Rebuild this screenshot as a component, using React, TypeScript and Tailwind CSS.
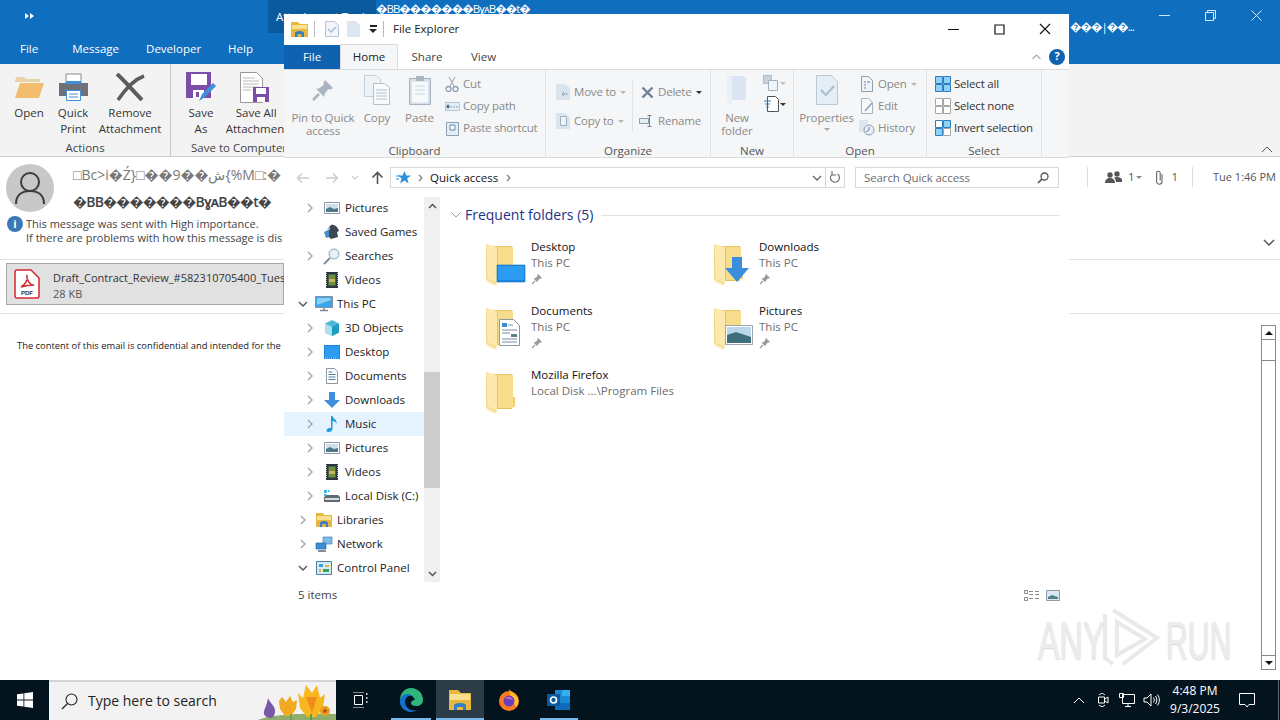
import type { ReactNode } from 'react';

const Q = '\uFFFD';

function Folder({ overlay }: { overlay?: ReactNode }) {
  return (
    <svg width="48" height="46" viewBox="0 0 48 46" className="shrink-0">
      <path d="M2 5h24v35H2z" fill="#e8c25e" />
      <path d="M12 6h15v33H12z" fill="#f7dc8c" />
      <path d="M27 28h2v10h-2z" fill="#f0cf72" />
      <path d="M0 3l11 3v35l-1 4-9-4L0 38z" fill="#fbe9ae" />
      <path d="M0 3l1 35 9 4" fill="none" stroke="#e9cd7a" strokeWidth="0.7" />
      {overlay}
    </svg>
  );
}

function Pin({ size = 12, color = '#9a9a9a' }: { size?: number; color?: string }) {
  return (
    <svg width={size} height={size} viewBox="0 0 12 12">
      <path d="M7 1l4 4-1 .6-1.5.1L6.800 8l-.2 1.500L2.500 5.400 4 5.200 6.300 3.500 6.400 2z" fill={color} />
      <path d="M4 8l-3 3" stroke={color} strokeWidth="1.300" />
    </svg>
  );
}

function FolderItem({ name, sub, pinned = true, overlay }: { name: string; sub: string; pinned?: boolean; overlay?: ReactNode }) {
  return (
    <div className="flex h-16 w-[228px] pl-[35px]">
      <div className="mt-[1px] w-[45px] shrink-0">
        <Folder overlay={overlay} />
      </div>
      <div className="-mt-[1px] flex flex-col whitespace-nowrap text-[11.5px] leading-4">
        <span className="text-[#111]">{name}</span>
        <span className="text-[#6d6d6d]">{sub}</span>
        {pinned ? (
          <span className="mt-[2px]">
            <Pin />
          </span>
        ) : null}
      </div>
    </div>
  );
}

function NavIcon({ kind }: { kind: string }) {
  switch (kind) {
    case 'pictures':
      return (
        <svg width="16" height="16" viewBox="0 0 16 16">
          <path d="M.5 2.500h15v11H.5z" fill="#fff" stroke="#8b98a3" />
          <path d="M2 4h12v8H2z" fill="#cfe0ec" />
          <path d="M2 9l4-2 4 2 4-1v4H2z" fill="#4d7a88" />
        </svg>
      );
    case 'games':
      return (
        <svg width="18" height="18" viewBox="0 0 18 18">
          <path d="M1 9l6-3v8l-4 1z" fill="#4a8fd0" />
          <path d="M8 2c3-1 7 2 8 6l-2 1 1 5-7 2-2-2V4z" fill="#3d4750" />
          <path d="M4 6l3-3v4z" fill="#8fb6da" />
        </svg>
      );
    case 'search':
      return (
        <svg width="18" height="18" viewBox="0 0 18 18">
          <circle cx="11" cy="7" r="5" fill="#e6f1f8" stroke="#8fa7b8" />
          <path d="M7 11l-6 6" stroke="#7a8b96" strokeWidth="1.800" />
        </svg>
      );
    case 'videos':
      return (
        <svg width="16" height="16" viewBox="0 0 16 16">
          <path d="M2 0h12v16H2z" fill="#2b3740" />
          <path d="M4.500 2.500h7v11h-7z" fill="#6f8f45" />
          <path d="M5 7h6v3H5z" fill="#c9b85a" />
          <path d="M2.500 1v14M13.500 1v14" stroke="#a9b4bb" strokeDasharray="1 1" />
        </svg>
      );
    case 'pc':
      return (
        <svg width="18" height="16" viewBox="0 0 18 16">
          <path d="M.5.500h17v11H.5z" fill="#3aa5ea" stroke="#84939f" />
          <path d="M2 2h14v2L2 9z" fill="#8ad0f6" />
          <path d="M5 14.500h8M9 12v2" stroke="#7b8a96" strokeWidth="1.500" />
        </svg>
      );
    case '3d':
      return (
        <svg width="16" height="16" viewBox="0 0 16 16">
          <path d="M8 0l7 3.500v9L8 16l-7-3.500v-9z" fill="#4cb8d6" />
          <path d="M1 3.500L8 7v9l-7-3.500z" fill="#a9e2ee" />
          <path d="M8 7l7-3.500v9L8 16z" fill="#1f9cc4" />
        </svg>
      );
    case 'desktop':
      return (
        <svg width="16" height="14" viewBox="0 0 16 14">
          <path d="M0 0h16v14H0z" fill="#1a86e0" />
          <path d="M1 1h14v11H1z" fill="#2b9cf2" />
          <path d="M1 13h14" stroke="#cfe8fb" strokeDasharray="1 1" />
        </svg>
      );
    case 'documents':
      return (
        <svg width="14" height="16" viewBox="0 0 14 16">
          <path d="M1.500.500h8l3 3v12h-11z" fill="#fff" stroke="#8b98a3" />
          <path d="M3.500 4h4M3.500 6.500h7M3.500 9h7M3.500 11.500h7" stroke="#4f7f9f" />
        </svg>
      );
    case 'downloads':
      return (
        <svg width="16" height="16" viewBox="0 0 16 16">
          <path d="M5 0h6v8h5l-8 8-8-8h5z" fill="#3f8fdb" />
        </svg>
      );
    case 'music':
      return (
        <svg width="14" height="16" viewBox="0 0 14 16">
          <path d="M6 0h1.500c.5 3 5 3.500 4 8C11 5.500 9 5.500 7.500 5v8c0 1.800-1.800 3-4 3S1 14.500 2 13.300c1-1.200 2.800-1.500 4-1z" fill="#1e9be0" />
        </svg>
      );
    case 'disk':
      return (
        <svg width="18" height="14" viewBox="0 0 18 14">
          <path d="M1 1h3v3H1zM5 1h1.500v2H5zM1 5h2.500v2H1z" fill="#3fb6e8" />
          <path d="M1 8l3-2h11l2 2v5H1z" fill="#5f6a72" />
          <path d="M2 9h14v2H2z" fill="#d7dcdf" />
        </svg>
      );
    case 'libraries':
      return (
        <svg width="16" height="16" viewBox="0 0 16 16">
          <path d="M0 1h7l1 2h8v12H0z" fill="#e9b73f" />
          <path d="M1 4h14v4H1z" fill="#f9e08f" />
          <path d="M4 15v-4c0-1 1-2 4-2s4 1 4 2v4H9.800v-3H6.200v3z" fill="#3a7dc2" />
        </svg>
      );
    case 'network':
      return (
        <svg width="18" height="16" viewBox="0 0 18 16">
          <path d="M8 1h9v7H8z" fill="#7bbbe8" stroke="#4d86b5" strokeWidth="0.700" />
          <path d="M1 7h10v6H1z" fill="#3a8dd2" stroke="#2f6d9f" strokeWidth="0.700" />
          <path d="M3 15h8" stroke="#5a6872" strokeWidth="1.500" />
        </svg>
      );
    default:
      return (
        <svg width="16" height="14" viewBox="0 0 16 14">
          <path d="M.5.500h15v13H.5z" fill="#d4ecf8" stroke="#4b7f9f" />
          <path d="M3 3h4v3H3z" fill="#3aa0d8" />
          <path d="M9 4h4v2H9zM3 8h2v3H3z" fill="#e2b33c" />
          <path d="M7 8h6v3H7z" fill="#3f9d5a" />
        </svg>
      );
  }
}

function NavRow({ label, icon, level = 2, state = 'closed', selected = false }: { label: string; icon: string; level?: 1 | 2; state?: 'closed' | 'open' | 'none'; selected?: boolean }) {
  return (
    <div className={`flex h-6 shrink-0 items-center text-[11.5px] text-[#222] ${selected ? 'bg-[#e5f3ff]' : ''}`}>
      <span className={`flex w-3 justify-center ${level === 2 ? 'ml-[20px]' : 'ml-[13px]'}`}>
        {state === 'closed' ? (
          <svg width="8" height="10" viewBox="0 0 8 10">
            <path d="M2 1l4 4-4 4" fill="none" stroke="#a6a6a6" strokeWidth="1.400" />
          </svg>
        ) : null}
        {state === 'open' ? (
          <svg width="10" height="8" viewBox="0 0 10 8">
            <path d="M1 2l4 4 4-4" fill="none" stroke="#555" strokeWidth="1.400" />
          </svg>
        ) : null}
      </span>
      <span className={`flex w-[18px] justify-center ${level === 2 ? 'ml-[7px]' : 'ml-[6px]'}`}>
        <NavIcon kind={icon} />
      </span>
      <span className="ml-[4px] whitespace-nowrap">{label}</span>
    </div>
  );
}

function RibbonGroup({ width, label, children }: { width: number; label: string; children: ReactNode }) {
  return (
    <div className="flex shrink-0 flex-col border-r border-[#e2e3e4]" style={{ width }}>
      <div className="flex h-[72px] shrink-0">{children}</div>
      <div className="mt-[1px] text-center text-[11.5px] leading-4 text-[#555]">{label}</div>
    </div>
  );
}

function BigButton({ width, icon, label, dim = true, caret = false }: { width: number; icon: ReactNode; label: ReactNode; dim?: boolean; caret?: boolean }) {
  return (
    <div className={`flex shrink-0 flex-col items-center whitespace-nowrap pt-[5px] text-center text-[11.5px] leading-[13px] tracking-[-0.1px] ${dim ? 'text-[#8a8a8a]' : 'text-[#333]'}`} style={{ width }}>
      <div className="flex h-[30px] items-center justify-center">{icon}</div>
      <div className="mt-[6px]">{label}</div>
      {caret ? <div className="mt-[4px] h-0 w-0 border-x-[3px] border-t-[3px] border-x-transparent border-t-[#aaa]" /> : null}
    </div>
  );
}

function SmallButton({ icon, label, dim = true, caret = false, dark = false }: { icon: ReactNode; label: string; dim?: boolean; caret?: boolean; dark?: boolean }) {
  return (
    <div className={`flex h-[22px] items-center whitespace-nowrap text-[11.5px] tracking-[-0.2px] ${dim ? 'text-[#8a8a8a]' : 'text-[#333]'}`}>
      <span className="flex w-[18px] justify-center">{icon}</span>
      <span className="ml-[2px]">{label}</span>
      {caret ? <span className={`ml-[4px] h-0 w-0 border-x-[3px] border-t-[3px] border-x-transparent ${dark ? 'border-t-[#333]' : 'border-t-[#b5b5b5]'}`} /> : null}
    </div>
  );
}

function SelectIcon({ kind }: { kind: 'all' | 'none' | 'invert' }) {
  const c = {
    all: ['#8fd0f6', '#8fd0f6', '#8fd0f6', '#8fd0f6'],
    none: ['#fff', '#fff', '#fff', '#fff'],
    invert: ['#fff', '#8fd0f6', '#8fd0f6', '#fff'],
  }[kind];
  const stroke = kind === 'none' ? '#a6a6a6' : '#2a7fc0';
  return (
    <svg width="16" height="16" viewBox="0 0 16 16">
      <path d="M.5.500h7v7h-7z" fill={c[0]} stroke={stroke} />
      <path d="M8.500.500h7v7h-7z" fill={c[1]} stroke={stroke} />
      <path d="M.5 8.500h7v7h-7z" fill={c[2]} stroke={stroke} />
      <path d="M8.500 8.500h7v7h-7z" fill={c[3]} stroke={kind === 'invert' ? '#a6a6a6' : stroke} />
    </svg>
  );
}

function Explorer() {
  return (
    <div className="absolute left-[284px] top-[14px] flex h-[594px] w-[785px] flex-col bg-white text-[#222]">
      {/* title bar */}
      <div className="flex h-[30px] shrink-0 items-center">
        <span className="ml-[7px]">
          <svg width="17" height="17" viewBox="0 0 17 17">
            <path d="M0 1h7l2 2h8v13H0z" fill="#e9b73f" />
            <path d="M1 4h15v4H1z" fill="#f9e08f" />
            <path d="M4 16v-4c0-1 1-2 4.500-2s4.500 1 4.500 2v4h-2.500v-3h-4v3z" fill="#2f7fc9" />
          </svg>
        </span>
        <span className="ml-[6px] h-4 w-px bg-[#bbb]" />
        <span className="ml-[10px]">
          <svg width="14" height="16" viewBox="0 0 14 16">
            <path d="M.5.500h9l4 4v11H.5z" fill="#f2f6fa" stroke="#b9c6d2" />
            <path d="M3 8l3 3 5-5" fill="none" stroke="#a6bfd6" strokeWidth="1.500" />
          </svg>
        </span>
        <span className="ml-[8px]">
          <svg width="13" height="16" viewBox="0 0 13 16">
            <path d="M0 0h9l4 4v12H0z" fill="#dde7f2" />
          </svg>
        </span>
        <span className="ml-[9px] flex flex-col items-center gap-[2px]">
          <span className="h-[1.5px] w-[7px] bg-[#222]" />
          <span className="h-0 w-0 border-x-[4px] border-t-[4px] border-x-transparent border-t-[#222]" />
        </span>
        <span className="ml-[6px] h-4 w-px bg-[#bbb]" />
        <span className="ml-[9px] text-[11.5px]">File Explorer</span>
        <div className="ml-auto mr-[1px] flex">
          <span className="flex h-[30px] w-[46px] items-center justify-center">
            <svg width="11" height="11" viewBox="0 0 11 11">
              <path d="M0 5.500h11" stroke="#111" />
            </svg>
          </span>
          <span className="flex h-[30px] w-[46px] items-center justify-center">
            <svg width="11" height="11" viewBox="0 0 11 11">
              <path d="M1 1h9v9H1z" fill="none" stroke="#111" strokeWidth="1.200" />
            </svg>
          </span>
          <span className="flex h-[30px] w-[46px] items-center justify-center">
            <svg width="12" height="12" viewBox="0 0 12 12">
              <path d="M1 1l10 10M11 1L1 11" stroke="#111" strokeWidth="1.100" />
            </svg>
          </span>
        </div>
      </div>
      {/* tabs */}
      <div className="flex h-[25px] shrink-0 items-stretch text-[11.5px]">
        <div className="mt-[1px] flex w-[56px] items-center justify-center bg-[#0f62b0] text-white">File</div>
        <div className="flex w-[58px] items-center justify-center border-x border-t border-[#dadbdc] bg-[#f5f6f7]">Home</div>
        <div className="flex w-[58px] items-center justify-center text-[#444]">Share</div>
        <div className="flex w-[55px] items-center justify-center text-[#444]">View</div>
        <div className="ml-auto mr-[4px] flex items-center gap-[8px]">
          <svg width="9" height="6" viewBox="0 0 9 6">
            <path d="M.5 5l4-4 4 4" fill="none" stroke="#aaa" strokeWidth="1.200" />
          </svg>
          <span className="flex h-4 w-4 items-center justify-center rounded-full bg-[#0f62b0] text-[11px] font-bold text-white">?</span>
        </div>
      </div>
      {/* ribbon */}
      <div className="flex h-[89px] shrink-0 border-y border-[#dadbdc] bg-[#f5f6f7]">
        <RibbonGroup width={262} label="Clipboard">
          <div className="ml-[6px]" />
          <BigButton
            width={66}
            label={
              <>
                Pin to Quick
                <br />
                access
              </>
            }
            icon={<Pin size={24} color="#a9b4be" />}
          />
          <BigButton
            width={42}
            label="Copy"
            icon={
              <svg width="26" height="30" viewBox="0 0 26 30">
                <path d="M.5.500h12l4 4v17H.5z" fill="#eef3f8" stroke="#c4cfd9" />
                <path d="M9.500 8.500h11l5 4v17h-16z" fill="#f7f9fb" stroke="#b4c2cf" />
                <path d="M12 15h11M12 18h11M12 21h11M12 24h11" stroke="#b4c2cf" />
              </svg>
            }
          />
          <BigButton
            width={43}
            label="Paste"
            icon={
              <svg width="22" height="30" viewBox="0 0 22 30">
                <path d="M.5 3.500h21v26H.5z" fill="#d4dfe9" stroke="#a6b3bf" />
                <path d="M3 6.500h16v21H3z" fill="#f7f9fb" />
                <path d="M7 1h8v5H7z" fill="#aab6c2" />
                <path d="M6 11h10M6 15h10M6 19h10" stroke="#c7d6e4" />
              </svg>
            }
          />
          <div className="ml-[2px] flex flex-col pt-[3px]">
            <SmallButton
              label="Cut"
              icon={
                <svg width="14" height="16" viewBox="0 0 14 16">
                  <circle cx="3.500" cy="13" r="2.500" fill="none" stroke="#8ba0b5" strokeWidth="1.300" />
                  <circle cx="10.500" cy="13" r="2.500" fill="none" stroke="#8ba0b5" strokeWidth="1.300" />
                  <path d="M4.500 11L10 1M9.500 11L4 1" stroke="#aab2b9" strokeWidth="1.200" />
                </svg>
              }
            />
            <SmallButton
              label="Copy path"
              icon={
                <svg width="15" height="9" viewBox="0 0 15 9">
                  <path d="M.5.500h14v8H.5z" fill="#e6eff7" stroke="#b9c6d2" />
                  <path d="M2 3h2v3H2zM5 5h2M8 5h2M11 5h2" stroke="#7fa4c6" />
                </svg>
              }
            />
            <SmallButton
              label="Paste shortcut"
              icon={
                <svg width="13" height="15" viewBox="0 0 13 15">
                  <path d="M.5 1.500h12v13H.5z" fill="#e6eef5" stroke="#8fa0b0" />
                  <path d="M4 4h5v5H4z" fill="#fff" stroke="#5d85a8" />
                </svg>
              }
            />
          </div>
        </RibbonGroup>
        <RibbonGroup width={165} label="Organize">
          <div className="flex w-[86px] shrink-0 flex-col gap-[7px] pl-[8px] pt-[11px]">
            <SmallButton
              caret
              label="Move to"
              icon={
                <svg width="14" height="16" viewBox="0 0 14 16">
                  <path d="M0 0h9l5 4v12H0z" fill="#d9e4ee" />
                  <path d="M6 10h6M6 10l2-2M6 10l2 2" stroke="#8fa5b9" />
                </svg>
              }
            />
            <SmallButton
              caret
              label="Copy to"
              icon={
                <svg width="14" height="16" viewBox="0 0 14 16">
                  <path d="M0 0h9l5 4v12H0z" fill="#d9e4ee" />
                  <path d="M4.500 3.500h6v9h-6z" fill="#eef3f8" stroke="#9cb0c2" />
                </svg>
              }
            />
          </div>
          <div className="mt-[10px] h-[52px] w-px bg-[#e2e3e4]" />
          <div className="ml-[5px] flex flex-col gap-[7px] pt-[11px]">
            <SmallButton
              caret
              dark
              label="Delete"
              icon={
                <svg width="13" height="13" viewBox="0 0 13 13">
                  <path d="M1.500 1.500l10 10M11.500 1.500l-10 10" stroke="#6d8299" strokeWidth="2.400" />
                </svg>
              }
            />
            <SmallButton
              label="Rename"
              icon={
                <svg width="16" height="12" viewBox="0 0 16 12">
                  <path d="M.5 3.500h9v5h-9z" fill="#e6eef5" stroke="#8fa0b0" />
                  <path d="M10.500 0v12M8.500.500h4M8.500 11.500h4" stroke="#6d8299" />
                </svg>
              }
            />
          </div>
        </RibbonGroup>
        <RibbonGroup width={83} label="New">
          <div className="ml-[6px]" />
          <BigButton
            width={40}
            label={
              <>
                New
                <br />
                folder
              </>
            }
            icon={
              <svg width="20" height="30" viewBox="0 0 20 30">
                <path d="M0 1h16l3 2v22H4l-1 4-3-3z" fill="#dbe6f2" />
                <path d="M0 1l5 1v24l-2 3-3-3z" fill="#eaf0f7" />
              </svg>
            }
          />
          <div className="ml-[6px] flex flex-col gap-[3px] pt-[4px]">
            <div className="flex h-[18px] items-center">
              <svg width="17" height="16" viewBox="0 0 17 16">
                <path d="M.5.500h8v8h-8z" fill="#c6d3de" stroke="#b0bdc8" />
                <path d="M5.500 5.500h9v10h-9z" fill="#f1f5f8" stroke="#9fb0bf" />
              </svg>
              <span className="h-0 w-0 border-x-[3px] border-t-[3px] border-x-transparent border-t-[#c0c0c0]" />
            </div>
            <div className="flex h-[18px] items-center">
              <svg width="16" height="16" viewBox="0 0 16 16">
                <path d="M4.500.500h8l3 3v12h-11z" fill="#fff" stroke="#555" />
                <path d="M1 5h7M2 8h5M3 11h3" stroke="#3a7fb8" strokeWidth="1.200" />
              </svg>
              <span className="ml-[1px] h-0 w-0 border-x-[3px] border-t-[3px] border-x-transparent border-t-[#333]" />
            </div>
          </div>
        </RibbonGroup>
        <RibbonGroup width={133} label="Open">
          <div className="ml-[4px]" />
          <BigButton
            width={57}
            caret
            label="Properties"
            icon={
              <svg width="22" height="30" viewBox="0 0 22 30">
                <path d="M.5.500h15l6 6v23H.5z" fill="#e6eef5" stroke="#b9c8d6" />
                <path d="M5 15l5 5 8-9" fill="none" stroke="#a9bfd2" strokeWidth="2.200" />
              </svg>
            }
          />
          <div className="ml-[3px] flex flex-col pt-[3px]">
            <SmallButton
              caret
              label="Open"
              icon={
                <svg width="13" height="16" viewBox="0 0 13 16">
                  <path d="M.5.500h7l4 4v11h-11z" fill="#eef3f8" stroke="#8fa0b0" />
                  <path d="M3 6h2M3 9h2M3 12h2M6 6h3" stroke="#6d8299" />
                </svg>
              }
            />
            <SmallButton
              label="Edit"
              icon={
                <svg width="13" height="16" viewBox="0 0 13 16">
                  <path d="M.5.500h7l4 4v11h-11z" fill="#f7f9fb" stroke="#a6b3bf" />
                  <path d="M4 13l7-8" stroke="#8ba0b5" strokeWidth="1.500" />
                </svg>
              }
            />
            <SmallButton
              label="History"
              icon={
                <svg width="16" height="16" viewBox="0 0 16 16">
                  <path d="M0 0h9v12H0z" fill="#dde7f0" />
                  <circle cx="10" cy="10" r="5" fill="#e6eef5" stroke="#8ba0b5" />
                  <path d="M10 7v3l-3 2" fill="none" stroke="#6d8299" />
                </svg>
              }
            />
          </div>
        </RibbonGroup>
        <RibbonGroup width={115} label="Select">
          <div className="ml-[7px] flex flex-col pt-[3px]">
            <SmallButton dim={false} label="Select all" icon={<SelectIcon kind="all" />} />
            <SmallButton dim={false} label="Select none" icon={<SelectIcon kind="none" />} />
            <SmallButton dim={false} label="Invert selection" icon={<SelectIcon kind="invert" />} />
          </div>
        </RibbonGroup>
      </div>
      {/* address row */}
      <div className="flex h-[39px] shrink-0 items-center">
        <span className="ml-[12px] w-[14px]">
          <svg width="14" height="12" viewBox="0 0 14 12">
            <path d="M13 6H2M6 1.500L1.500 6 6 10.500" fill="none" stroke="#ccc" strokeWidth="1.500" />
          </svg>
        </span>
        <span className="ml-[15px] w-[14px]">
          <svg width="14" height="12" viewBox="0 0 14 12">
            <path d="M1 6h11M8 1.500L12.500 6 8 10.500" fill="none" stroke="#ccc" strokeWidth="1.500" />
          </svg>
        </span>
        <span className="ml-[12px] w-[8px]">
          <svg width="8" height="6" viewBox="0 0 8 6">
            <path d="M1 1l3 3 3-3" fill="none" stroke="#ccc" strokeWidth="1.200" />
          </svg>
        </span>
        <span className="ml-[12px] w-[14px]">
          <svg width="13" height="13" viewBox="0 0 13 13">
            <path d="M6.500 13V2M1.500 6.500l5-5 5 5" fill="none" stroke="#555" strokeWidth="1.600" />
          </svg>
        </span>
        <div className="ml-[5px] flex h-[21px] w-[436px] items-center border border-[#d9d9d9] text-[11.5px]">
          <svg className="ml-[5px]" width="15" height="14" viewBox="0 0 15 14">
            <path d="M8.500 0l1.700 4.500H15l-3.800 3 1.400 5-4.100-3-4.400 3 1.500-5-3.600-3h4.600z" fill="#2c8fdc" />
            <path d="M0 5h4M0 8h3" stroke="#2c8fdc" />
          </svg>
          <svg className="ml-[7px]" width="5" height="8" viewBox="0 0 5 8">
            <path d="M1 1l3 3-3 3" fill="none" stroke="#777" strokeWidth="1.100" />
          </svg>
          <span className="ml-[7px] text-[#111]">Quick access</span>
          <svg className="ml-[8px]" width="5" height="8" viewBox="0 0 5 8">
            <path d="M1 1l3 3-3 3" fill="none" stroke="#777" strokeWidth="1.100" />
          </svg>
          <svg className="ml-auto mr-[3px]" width="10" height="6" viewBox="0 0 10 6">
            <path d="M1 1l4 4 4-4" fill="none" stroke="#666" strokeWidth="1.300" />
          </svg>
        </div>
        <div className="flex h-[21px] w-[19px] items-center justify-center border-y border-r border-[#d9d9d9]">
          <svg width="12" height="13" viewBox="0 0 12 13">
            <path d="M3 3.300A4.500 4.500 0 1 0 8.500 3M3 0v4h4" fill="none" stroke="#666" strokeWidth="1.100" />
          </svg>
        </div>
        <div className="ml-[10px] flex h-[21px] w-[204px] items-center border border-[#d9d9d9] pl-[8px] text-[11.5px] tracking-[-0.1px] text-[#6d6d6d]">
          Search Quick access
          <svg className="ml-auto mr-[9px]" width="12" height="12" viewBox="0 0 12 12">
            <circle cx="7.500" cy="4.500" r="3.500" fill="none" stroke="#555" strokeWidth="1.300" />
            <path d="M5 7l-4 4" stroke="#555" strokeWidth="1.700" />
          </svg>
        </div>
      </div>
      {/* main */}
      <div className="flex h-[385px] shrink-0">
        <div className="w-[140px] shrink-0 overflow-hidden">
          <div className="-mt-[1px] flex flex-col">
            <NavRow label="Pictures" icon="pictures" />
            <NavRow label="Saved Games" icon="games" state="none" />
            <NavRow label="Searches" icon="search" />
            <NavRow label="Videos" icon="videos" state="none" />
            <NavRow label="This PC" icon="pc" level={1} state="open" />
            <NavRow label="3D Objects" icon="3d" />
            <NavRow label="Desktop" icon="desktop" />
            <NavRow label="Documents" icon="documents" />
            <NavRow label="Downloads" icon="downloads" />
            <NavRow label="Music" icon="music" selected />
            <NavRow label="Pictures" icon="pictures" />
            <NavRow label="Videos" icon="videos" />
            <NavRow label="Local Disk (C:)" icon="disk" />
            <NavRow label="Libraries" icon="libraries" level={1} />
            <NavRow label="Network" icon="network" level={1} />
            <NavRow label="Control Panel" icon="panel" level={1} state="open" />
          </div>
        </div>
        <div className="flex w-[16px] shrink-0 flex-col bg-[#f0f0f0]">
          <div className="flex h-[17px] items-center justify-center">
            <svg width="9" height="6" viewBox="0 0 9 6">
              <path d="M1 5l3.500-3.500L8 5" fill="none" stroke="#555" strokeWidth="1.500" />
            </svg>
          </div>
          <div className="mt-[158px] h-[116px] bg-[#cdcdcd]" />
          <div className="mt-auto flex h-[17px] items-center justify-center">
            <svg width="9" height="6" viewBox="0 0 9 6">
              <path d="M1 1l3.500 3.500L8 1" fill="none" stroke="#555" strokeWidth="1.500" />
            </svg>
          </div>
        </div>
        <div className="min-w-0 flex-1">
          <div className="ml-[11px] mr-[9px] mt-[8px] flex h-5 items-center">
            <svg width="10" height="6" viewBox="0 0 10 6">
              <path d="M.5.500L5 5 9.500.500" fill="none" stroke="#8a9bb0" />
            </svg>
            <span className="ml-[4px] text-[14px] leading-5 text-[#1e3287]">Frequent folders (5)</span>
            <span className="ml-[8px] h-px flex-1 bg-[#e2e2e2]" />
          </div>
          <div className="mt-[15px] flex flex-wrap pl-[11px]">
            <FolderItem
              name="Desktop"
              sub="This PC"
              overlay={
                <g>
                  <path d="M11 24h28v17H11z" fill="#1a86e0" stroke="#0e6fc0" strokeWidth="0.600" />
                  <path d="M12 25h26v14H12z" fill="#2b9cf2" />
                </g>
              }
            />
            <FolderItem
              name="Downloads"
              sub="This PC"
              overlay={<path d="M18 16h10v11h7L23 41 11 27h7z" fill="#3b8ede" />}
            />
            <FolderItem
              name="Documents"
              sub="This PC"
              overlay={
                <g>
                  <path d="M13.500 14.500h14l6 6v20h-20z" fill="#fff" stroke="#8b98a3" />
                  <path d="M16 18h5v4h-5z" fill="#3a8dd2" />
                  <path d="M22 20h5M16 25h15M16 28h8M16 34h15M16 37h15" stroke="#6f8fa8" />
                  <path d="M25 29h6v3h-6z" fill="#5d7f8f" />
                </g>
              }
            />
            <FolderItem
              name="Pictures"
              sub="This PC"
              overlay={
                <g>
                  <path d="M11.500 20.500h27v19h-27z" fill="#fff" stroke="#9aa5ad" />
                  <path d="M13 22h24v16H13z" fill="#bcd6ea" />
                  <path d="M13 30l9-3 15 5v6H13z" fill="#3f6f7c" />
                </g>
              }
            />
            <FolderItem name="Mozilla Firefox" sub="Local Disk ...\Program Files" pinned={false} />
          </div>
        </div>
      </div>
      {/* status */}
      <div className="flex flex-1 items-center pl-[14px] pr-[9px] text-[11.5px] text-[#444]">
        5 items
        <svg className="ml-auto" width="16" height="11" viewBox="0 0 16 11">
          <path d="M.5.500h3v3h-3zM.5 7.500h3v3h-3z" fill="none" stroke="#8a8a8a" />
          <path d="M5 1.500h4M11 1.500h4M5 4.500h4M11 4.500h4M5 8.500h4M11 8.500h4" stroke="#8a8a8a" />
        </svg>
        <svg className="ml-[6px]" width="14" height="11" viewBox="0 0 14 11">
          <path d="M.5.500h13v10H.5z" fill="#dbe9f5" stroke="#8a9aa8" />
          <path d="M2 7l4-2 6 2v2H2z" fill="#52808e" />
        </svg>
      </div>
    </div>
  );
}

function OutlookRibbonButton({ width, icon, label, className = '' }: { width: number; icon: ReactNode; label: ReactNode; className?: string }) {
  return (
    <div className={`flex shrink-0 flex-col items-center text-center text-[11.5px] leading-4 text-[#333] ${className}`} style={{ width }}>
      <div className="flex h-[32px] items-center justify-center">{icon}</div>
      <div className="mt-[2px] whitespace-nowrap">{label}</div>
    </div>
  );
}

function Outlook() {
  return (
    <div className="flex h-[680px] shrink-0 flex-col overflow-hidden bg-white">
      {/* title area */}
      <div className="relative h-[64px] shrink-0 bg-[#106ebe] text-white">
        <div className="flex h-[33px]">
          <div className="ml-[25px] mt-[11px] flex h-[10px] items-center">
            <svg width="9" height="8" viewBox="0 0 9 8">
              <path d="M0 1l4 3-4 3zM5 1l4 3-4 3z" fill="#fff" />
            </svg>
          </div>
          <div className="ml-[234px] flex h-[33px] w-[108px] items-center whitespace-nowrap bg-[#0b5a9e] pl-[8px] text-[11.5px]">Attachment Tools</div>
          <div className="mt-[1px] whitespace-nowrap text-[11.5px] leading-4 tracking-[-1px]">{`${Q}BB${Q}${Q}${Q}${Q}${Q}${Q}${Q}B\u0263\u1D00B${Q}${Q}t${Q}`}</div>
          <div className="ml-auto mr-[1px] flex">
            <span className="flex h-[30px] w-[46px] items-center justify-center">
              <svg width="11" height="11" viewBox="0 0 11 11">
                <path d="M0 5.500h11" stroke="#d8e8f5" />
              </svg>
            </span>
            <span className="flex h-[30px] w-[46px] items-center justify-center">
              <svg width="11" height="11" viewBox="0 0 11 11">
                <path d="M.5 2.500h8v8h-8zM2.500 2.500v-2h8v8h-2" fill="none" stroke="#d8e8f5" />
              </svg>
            </span>
            <span className="flex h-[30px] w-[46px] items-center justify-center">
              <svg width="11" height="11" viewBox="0 0 11 11">
                <path d="M.5.500l10 10M10.500.500l-10 10" stroke="#d8e8f5" />
              </svg>
            </span>
          </div>
        </div>
        <div className="absolute left-[1070px] top-[19px] whitespace-nowrap text-[11.5px] leading-4 tracking-[-1px]">{`${Q}${Q}${Q}|${Q}${Q}...`}</div>
        <div className="flex h-[31px] items-center text-[11.5px]">
          <span className="ml-[20px]">File</span>
          <span className="ml-[34px]">Message</span>
          <span className="ml-[27px]">Developer</span>
          <span className="ml-[27px]">Help</span>
        </div>
      </div>
      {/* ribbon */}
      <div className="flex h-[93px] shrink-0 border-b border-[#d2d2d2] bg-[#f3f3f3]">
        <div className="flex w-[171px] shrink-0 flex-col border-r border-[#c8c8c8]">
          <div className="flex flex-1 pt-[7px]">
            <div className="w-[7px]" />
            <OutlookRibbonButton
              width={44}
              label="Open"
              icon={
                <svg width="30" height="24" viewBox="0 0 30 24">
                  <path d="M1 5l2-3h7l2 2h14v3H1z" fill="#e8d2a8" />
                  <path d="M6 8h24l-5 15H1z" fill="#f2bd6d" />
                </svg>
              }
            />
            <OutlookRibbonButton
              width={44}
              label={
                <>
                  Quick
                  <br />
                  Print
                </>
              }
              icon={
                <svg width="29" height="28" viewBox="0 0 29 28">
                  <path d="M7 1h15v9H7z" fill="#fff" stroke="#8a8a8a" />
                  <path d="M0 10h29v13H0z" fill="#6e7178" />
                  <path d="M7 8h15v3H7z" fill="#3f8fdb" />
                  <path d="M7.500 17.500h14v10h-14z" fill="#fff" stroke="#3f8fdb" />
                  <path d="M10 21h9M10 24h9" stroke="#3f8fdb" />
                </svg>
              }
            />
            <OutlookRibbonButton
              width={70}
              label={
                <>
                  Remove
                  <br />
                  Attachment
                </>
              }
              icon={
                <svg width="30" height="28" viewBox="0 0 30 28">
                  <path d="M2 1c6 5 17 18 25 26" fill="none" stroke="#5c5c5c" strokeWidth="4" />
                  <path d="M3 27C9 18 18 7 29 3" fill="none" stroke="#5c5c5c" strokeWidth="3.500" />
                </svg>
              }
            />
          </div>
          <div className="text-center text-[11.5px] leading-4 text-[#444]">Actions</div>
        </div>
        <div className="flex flex-1 flex-col">
          <div className="flex flex-1 pt-[7px]">
            <OutlookRibbonButton
              width={60}
              label={
                <>
                  Save
                  <br />
                  As
                </>
              }
              icon={
                <svg width="30" height="30" viewBox="0 0 30 30">
                  <path d="M0 0h25v26H0z" fill="#7b4fa8" />
                  <path d="M5 2h16v11H5z" fill="#fff" />
                  <path d="M7 18h11v8H7z" fill="#fff" />
                  <path d="M10 20h3v5h-3z" fill="#7b4fa8" />
                  <path d="M13 29l3-7 11-11 3 3-11 11z" fill="#3f8fdb" />
                </svg>
              }
            />
            <OutlookRibbonButton
              className="-ml-[7px]"
              width={62}
              label={
                <span className="block text-left">
                  <span className="ml-[10px]">Save All</span>
                  <br />
                  Attachmen
                </span>
              }
              icon={
                <svg width="30" height="31" viewBox="0 0 30 31">
                  <path d="M.5.500h16l6 6v24H.5z" fill="#fff" stroke="#999" />
                  <path d="M3 6h12M3 9h16M3 12h16M3 15h16M3 18h8" stroke="#bbb" />
                  <path d="M13 15h16v15H13z" fill="#7b4fa8" />
                  <path d="M16 16h10v6H16zM17 25h8v5h-8z" fill="#fff" />
                </svg>
              }
            />
          </div>
          <div className="ml-[20px] whitespace-nowrap text-[11.5px] leading-4 text-[#444]">Save to Computer</div>
        </div>
        <div className="flex shrink-0 items-end pb-[3px] pr-[7px]">
          <svg width="12" height="7" viewBox="0 0 12 7">
            <path d="M1 6l5-5 5 5" fill="none" stroke="#555" />
          </svg>
        </div>
      </div>
      {/* message head */}
      <div className="flex h-[103px] shrink-0 border-b border-[#e3e3e3]">
        <div className="ml-[6px] mt-[7px] flex h-12 w-12 shrink-0 items-center justify-center rounded-full bg-[#c8c8c8]">
          <svg width="32" height="34" viewBox="0 0 32 34">
            <circle cx="16" cy="11" r="9" fill="none" stroke="#3c3c3c" strokeWidth="2" />
            <path d="M2 33c0-9 6-13 14-13s14 4 14 13" fill="none" stroke="#3c3c3c" strokeWidth="2" />
          </svg>
        </div>
        <div className="ml-[19px] mt-[8px] min-w-0 flex-1 whitespace-nowrap">
          <div className="text-[14px] leading-5 text-[#777]">{`\u25A1Bc>i${Q}\u0179}\u25A1${Q}${Q}9${Q}${Q}\u0634{%M\u25A1:${Q}`}</div>
          <div className="mt-[7px] text-[14px] font-semibold leading-5 tracking-[-0.8px] text-[#444]">{`${Q}BB${Q}${Q}${Q}${Q}${Q}${Q}${Q}B\u0263\u1D00B${Q}${Q}t${Q}`}</div>
        </div>
        <div className="flex shrink-0 flex-col items-end">
          <div className="mt-[8px] flex h-[24px] items-center pr-[4px] text-[11.5px] text-[#555]">
            <span className="mr-[14px] text-[#666]">{'\u22EE'}</span>
            <span className="h-5 w-px bg-[#ddd]" />
            <svg className="ml-[17px]" width="17" height="12" viewBox="0 0 17 12">
              <circle cx="5" cy="4" r="2.700" fill="#555" />
              <path d="M0 12c0-3 2-5 5-5s5 2 5 5z" fill="#555" />
              <circle cx="12" cy="3" r="2.700" fill="#555" />
              <path d="M9 6.500c2-1 7-1 8 2V11h-6c0-2-1-3-2-4.500z" fill="#555" />
            </svg>
            <span className="ml-[6px]">1</span>
            <span className="ml-[2px] h-0 w-0 border-x-[3px] border-t-[3px] border-x-transparent border-t-[#888]" />
            <svg className="ml-[13px]" width="9" height="15" viewBox="0 0 9 15">
              <path d="M7 4v7.500a2.700 2.700 0 0 1-5.400 0V3a1.800 1.800 0 0 1 3.600 0v7.500" fill="none" stroke="#666" strokeWidth="1.100" />
            </svg>
            <span className="ml-[7px]">1</span>
            <span className="ml-[14px] h-5 w-px bg-[#ddd]" />
            <span className="ml-[20px] text-[11px]">Tue 1:46 PM</span>
          </div>
          <div className="mt-[50px] pr-[5px]">
            <svg width="12" height="7" viewBox="0 0 12 7">
              <path d="M1 1l5 5 5-5" fill="none" stroke="#555" strokeWidth="1.500" />
            </svg>
          </div>
        </div>
      </div>
      {/* info lines sit over the head */}
      <div className="relative h-0">
        <div className="absolute left-[7px] top-[-43px] flex whitespace-nowrap text-[11px] leading-[14px] text-[#444]">
          <span className="mr-[3px] mt-[-1px] flex h-4 w-4 shrink-0 items-center justify-center rounded-full bg-[#3b78b8] text-[11px] font-bold text-white">i</span>
          <span>
            This message was sent with High importance.
            <br />
            If there are problems with how this message is dis
          </span>
        </div>
      </div>
      {/* attachment */}
      <div className="flex h-[54px] shrink-0 items-start border-b border-[#e3e3e3] pl-[6px] pt-[3px]">
        <div className="flex h-[42px] w-[278px] items-center border border-[#a8a8a8] bg-[#e1e1e1]">
          <svg className="ml-[7px] shrink-0" width="26" height="30" viewBox="0 0 26 30">
            <path d="M1 3a2 2 0 0 1 2-2h14l8 8v18a2 2 0 0 1-2 2H3a2 2 0 0 1-2-2z" fill="#fff" stroke="#d6262e" strokeWidth="1.500" />
            <path d="M7 18c4-2 7-7 6-12-1 5 3 10 7 10-5 0-10 1-13 2z" fill="none" stroke="#d6262e" strokeWidth="1.500" />
            <text x="13" y="26" fontSize="6" fontWeight="700" textAnchor="middle" fill="#333" fontFamily="Liberation Sans, sans-serif">PDF</text>
          </svg>
          <div className="ml-[13px] mt-[3px] whitespace-nowrap text-[11px] leading-4">
            <div className="text-[#333]">Draft_Contract_Review_#582310705400_Tues</div>
            <div className="text-[#555]">28 KB</div>
          </div>
        </div>
      </div>
      {/* body */}
      <div className="flex min-h-0 flex-1 pl-[17px] pr-[4px]">
        <div className="mt-[25px] min-w-0 flex-1 whitespace-nowrap text-[9.4px] leading-[13px] text-[#222]">
          The content of this email is confidential and intended for the
        </div>
        <div className="mb-[10px] mt-[11px] flex w-[15px] shrink-0 flex-col border border-[#8a8a8a]">
          <div className="flex h-[14px] items-center justify-center border-b border-[#8a8a8a]">
            <span className="h-0 w-0 border-x-[4px] border-b-[4px] border-x-transparent border-b-[#111]" />
          </div>
          <div className="h-[21px] border-b border-[#8a8a8a]" />
          <div className="mt-auto flex h-[14px] items-center justify-center border-t border-[#8a8a8a]">
            <span className="h-0 w-0 border-x-[4px] border-t-[4px] border-x-transparent border-t-[#111]" />
          </div>
        </div>
      </div>
    </div>
  );
}

function Taskbar() {
  return (
    <div className="flex h-10 shrink-0 items-stretch bg-[#04141f] text-white">
      <div className="flex w-[49px] items-center justify-center">
        <svg width="16" height="16" viewBox="0 0 16 16">
          <path d="M0 2.300l6.500-.9v6.200H0zM7.300 1.300L16 0v7.600H7.300zM0 8.400h6.500v6.200L0 13.700zM7.300 8.400H16V16l-8.700-1.200z" fill="#fff" />
        </svg>
      </div>
      <div className="flex w-[287px] shrink-0 items-center overflow-hidden border-t-2 border-[#d4d4d4] bg-[#f2f2f2] text-[#222]">
        <svg className="ml-[12px]" width="17" height="17" viewBox="0 0 17 17">
          <circle cx="10.500" cy="6.500" r="5.500" fill="none" stroke="#222" strokeWidth="1.100" />
          <path d="M6.500 10.500L1 16" stroke="#222" strokeWidth="1.200" />
        </svg>
        <span className="ml-[10px] whitespace-nowrap text-sm">Type here to search</span>
        <svg className="ml-auto mt-[2px] shrink-0" width="80" height="38" viewBox="0 0 80 38">
          <path d="M0 38c10-6 40-8 80-7v7z" fill="#8fae6b" />
          <path d="M15 35c-5 0-8-3-7-7 1-3 3-7 4-13 2 5 7 8 7 13 0 4-2 7-4 7z" fill="#7a58a8" />
          <path d="M26 14l4 5 4-6 3 6 4-2-1 9-5 7h-6l-5-7-1-8z" fill="#f2a91f" />
          <path d="M42 10l5 5 3-13 6 8 5-8 3 13 5-4-2 14-7 9h-9l-7-9z" fill="#f7b71e" />
          <path d="M50 14l6 16 5-16z" fill="#f08c1a" />
          <path d="M55 31v7" stroke="#5f9c4a" strokeWidth="2" />
          <path d="M35 31v7" stroke="#5f9c4a" strokeWidth="1.500" />
          <circle cx="69" cy="28" r="5" fill="#ef9c22" />
          <circle cx="69" cy="28" r="2" fill="#b2571a" />
        </svg>
      </div>
      <div className="flex w-[48px] items-center justify-center">
        <svg width="16" height="16" viewBox="0 0 16 16">
          <path d="M1 0h11M1 16h11M2.500 3.500h8v9h-8z" fill="none" stroke="#fff" />
          <path d="M14 2h1.500M14 6h1.500M14 10h1.500" stroke="#fff" strokeWidth="1.500" />
        </svg>
      </div>
      <TaskApp underline width={40} className="ml-[7px] mr-[5px]">
        <svg width="24" height="24" viewBox="0 0 24 24">
          <path d="M12 0a12 12 0 0 1 12 12c0 4-3 6-7 6-3 0-5-1-5-3s2-3 4-3c-1-3-3-5-6-5C6 7 2 9 1 12 1 5 6 0 12 0z" fill="#2db77e" />
          <path d="M1 12c1-4 4-6 8-6 2 0 3 1 4 2-4-1-7 2-7 6 0 5 5 10 12 8-2 1-4 2-6 2C6 24 0 19 1 12z" fill="#1173c8" />
        </svg>
      </TaskApp>
      <TaskApp underline width={48} active>
        <svg width="22" height="20" viewBox="0 0 22 20">
          <path d="M0 0h9l3 3h10v17H0z" fill="#e9b73f" />
          <path d="M1 4h20v6H1z" fill="#f9e08f" />
          <path d="M5 20v-5c0-1 2-2 6-2s6 1 6 2v5h-3v-3H8v3z" fill="#2f7fc9" />
        </svg>
      </TaskApp>
      <TaskApp width={48} className="ml-[1px]">
        <svg width="22" height="22" viewBox="0 0 22 22">
          <circle cx="11" cy="12" r="10" fill="#ff7a1e" />
          <path d="M11 0c2 3 7 5 9 10 1 3 0 6-2 8L13 8z" fill="#ffc12c" />
          <circle cx="11" cy="12" r="5.500" fill="#6a3fb8" />
          <path d="M7 9c3-2 7-1 8 2-2-1-5-1-8-2z" fill="#d86bc7" />
        </svg>
      </TaskApp>
      <TaskApp underline width={38} className="ml-[7px]">
        <svg width="24" height="22" viewBox="0 0 24 22">
          <path d="M8 1h15v20H8z" fill="#1a8ad4" />
          <path d="M15 1h8v6h-8z" fill="#35b0ee" />
          <path d="M8 14h15v7H8z" fill="#0f6cbd" />
          <path d="M0 5h13v12H0z" fill="#0b5a9e" />
          <circle cx="6.500" cy="11" r="3" fill="none" stroke="#fff" strokeWidth="1.700" />
        </svg>
      </TaskApp>
      <div className="ml-auto flex items-stretch">
        <span className="flex w-[24px] items-center justify-center">
          <svg width="12" height="7" viewBox="0 0 12 7">
            <path d="M1 6l5-5 5 5" fill="none" stroke="#fff" />
          </svg>
        </span>
        <span className="flex w-[24px] items-center justify-center">
          <svg width="12" height="16" viewBox="0 0 12 16">
            <path d="M1.500 5h6v6h-6zM8 7l3-2v6l-3-2M2 3c2-2 4-2 6 0M2 13c2 2 4 2 6 0" fill="none" stroke="#fff" />
          </svg>
        </span>
        <span className="flex w-[24px] items-center justify-center">
          <svg width="16" height="14" viewBox="0 0 16 14">
            <path d="M3.500 1.500h12v9h-12zM9 11v2M6 13.500h6M.5.500h4v4h-4z" fill="#04141f" stroke="#fff" />
          </svg>
        </span>
        <span className="mr-[4px] flex w-[24px] items-center justify-center">
          <svg width="17" height="14" viewBox="0 0 17 14">
            <path d="M1 5h3l4-4v12l-4-4H1zM10.500 4.500c1 1.500 1 3.500 0 5M12.500 3c1.800 2.500 1.800 5.500 0 8M14.500 1.500c2.500 3.500 2.500 7.500 0 11" fill="none" stroke="#fff" />
          </svg>
        </span>
        <div className="flex w-[56px] flex-col items-center justify-center whitespace-nowrap text-xs leading-[18px]">
          <span>4:48 PM</span>
          <span>9/3/2025</span>
        </div>
        <span className="flex w-[48px] items-center justify-center">
          <svg width="16" height="16" viewBox="0 0 16 16">
            <path d="M.5 1.500h15v11H10L8 15l-2-2.500H.5z" fill="none" stroke="#fff" />
          </svg>
        </span>
        <span className="mr-[1px] w-[8px] border-r border-[#5a6872]" />
      </div>
    </div>
  );
}

function TaskApp({ width, active = false, underline = false, className = '', children }: { width: number; active?: boolean; underline?: boolean; className?: string; children: ReactNode }) {
  return (
    <div className={`relative flex items-center justify-center ${active ? 'bg-[#2d3d47]' : ''} ${className}`} style={{ width }}>
      {children}
      {underline ? <span className="absolute inset-x-0 bottom-0 h-[2px] bg-[#76b9ed]" /> : null}
    </div>
  );
}

function Watermark() {
  return (
    <div className="pointer-events-none absolute left-[1038px] top-[608px] flex h-[64px] w-[200px] items-center font-['Liberation_Sans',sans-serif] text-[#ececec] [text-shadow:0_1px_2px_#d5d5d5]">
      <span className="w-[64px] origin-left scale-x-[0.6] text-[54px] leading-none whitespace-nowrap">ANY</span>
      <svg className="shrink-0" width="62" height="64" viewBox="0 0 60 64">
        <path d="M2 6v44l8 6M10 2l44 28-34 26M14 14l28 17-28 16z" fill="none" stroke="#e9e9e9" strokeWidth="4" />
      </svg>
      <span className="ml-[2px] w-[66px] origin-left scale-x-[0.56] text-[54px] leading-none whitespace-nowrap">RUN</span>
    </div>
  );
}

export default function App() {
  return (
    <div className="relative flex h-[720px] w-[1280px] flex-col overflow-hidden bg-white font-['Open_Sans',sans-serif]">
      <Outlook />
      <Taskbar />
      <Explorer />
      <Watermark />
    </div>
  );
}
